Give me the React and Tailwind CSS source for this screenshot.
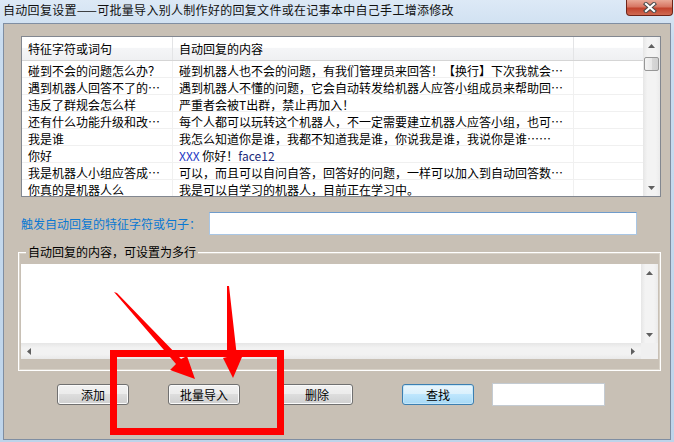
import React from 'react';

const rows = [
  ['碰到不会的问题怎么办？', '碰到机器人也不会的问题，有我们管理员来回答！【换行】下次我就会…'],
  ['遇到机器人回答不了的…', '遇到机器人不懂的问题，它会自动转发给机器人应答小组成员来帮助回…'],
  ['违反了群规会怎么样', '严重者会被T出群，禁止再加入！'],
  ['还有什么功能升级和改…', '每个人都可以玩转这个机器人，不一定需要建立机器人应答小组，也可…'],
  ['我是谁', '我怎么知道你是谁，我都不知道我是谁，你说我是谁，我说你是谁……'],
  ['你好', 'hello'],
  ['我是机器人小组应答成…', '可以，而且可以自问自答，回答好的问题，一样可以加入到自动回答数…'],
  ['你真的是机器人么', '我是可以自学习的机器人，目前正在学习中。'],
];

function Tri({ dir }) {
  const pts = {
    up: '0,4 3.5,0 7,4',
    down: '0,0 7,0 3.5,4',
    left: '4,0 4,7 0,3.5',
    right: '0,0 4,3.5 0,7',
  }[dir];
  const w = dir === 'up' || dir === 'down' ? 7 : 4;
  const h = dir === 'up' || dir === 'down' ? 4 : 7;
  return (
    <svg width={w} height={h} viewBox={`0 0 ${w} ${h}`}>
      <polygon points={pts} fill="#5f5f5f" />
    </svg>
  );
}

function VScroll({ thumb }) {
  return (
    <div className="w-[17px] h-full flex flex-col bg-[linear-gradient(90deg,#e6e6e6,#f3f3f3_25%,#f3f3f3_75%,#ebebeb)]">
      <div className="h-[17px] flex items-center justify-center shrink-0">
        <Tri dir="up" />
      </div>
      {thumb && (
        <div className="mt-[3px] h-[14px] mx-[1px] rounded-[2px] border border-[#979797] bg-[linear-gradient(90deg,#f4f4f4,#e8e8e8_50%,#d8d8d8_51%,#d0d0d0)] shrink-0" />
      )}
      <div className="flex-1" />
      <div className="h-[17px] flex items-center justify-center shrink-0">
        <Tri dir="down" />
      </div>
    </div>
  );
}

function Btn({ children, focused }) {
  return (
    <div
      className={`w-[72px] h-[21px] shrink-0 rounded-[3px] border flex items-center justify-center leading-[16px] text-[12px] text-black ${
        focused
          ? 'border-[#3c7fb1] bg-[linear-gradient(#eaf6fd,#d9f0fc_50%,#bee6fd_50%,#a7d9f5)] shadow-[inset_0_0_0_1px_#c5e6f8]'
          : 'border-[#707070] bg-[linear-gradient(#f2f2f2,#ebebeb_50%,#dddddd_50%,#cfcfcf)] shadow-[inset_0_0_0_1px_#fbfbfb]'
      }`}
    >
      {children}
    </div>
  );
}

export default function App() {
  return (
    <div className="relative w-[674px] h-[442px] overflow-hidden flex flex-col bg-[linear-gradient(#dde9f6,#c9dcef_40px,#bed4ea)] font-['Noto_Sans_CJK_SC','Liberation_Sans',sans-serif] text-[12px] text-black">
      {/* title bar */}
      <div className="h-[23px] flex items-start shrink-0">
        <div className="pl-[3px] pt-[2px] leading-[16px] text-[12px] tracking-[0.3px] text-[#111] whitespace-nowrap">
          自动回复设置——可批量导入别人制作好的回复文件或在记事本中自己手工增添修改
        </div>
        <div className="ml-auto mr-[1px] w-[47px] h-[16px] rounded-b-[4px] border border-t-0 border-[#6e2418] bg-[linear-gradient(#e9a897,#d77663_45%,#c2432d_55%,#cf6a52)] flex items-center justify-center">
          <svg width="14" height="11" viewBox="0 0 14 11">
            <path d="M3 2 L11 9 M11 2 L3 9" stroke="#4a4a4a" strokeWidth="4.2" strokeLinecap="square" />
            <path d="M3 2 L11 9 M11 2 L3 9" stroke="#ffffff" strokeWidth="2.2" strokeLinecap="square" />
          </svg>
        </div>
      </div>

      {/* client area */}
      <div className="flex-1 ml-[3px] mr-[3px] mb-[2px] border border-[#7f8ea2] bg-[#c8c0b5] pl-[14px] pr-[9px] pt-[12px] flex flex-col">
        {/* list view */}
        <div className="ml-[3px] h-[161px] border border-[#828790] bg-white flex shrink-0 overflow-hidden">
          <div className="flex-1 flex flex-col">
            <div className="h-[24px] flex border-b border-[#d5d5d5] bg-[linear-gradient(#ffffff,#ffffff_45%,#f4f5f7_50%,#eff0f2)] shrink-0">
              <div className="w-[151px] shrink-0 border-r border-[#e3e4e6] pl-[6px] pt-[4px] leading-[16px]">特征字符或词句</div>
              <div className="w-[401px] shrink-0 border-r border-[#e3e4e6] pl-[6px] pt-[4px] leading-[16px]">自动回复的内容</div>
              <div className="flex-1" />
            </div>
            {rows.map(([k, v]) => (
              <div key={k} className="h-[17px] shrink-0 flex border-b border-[#f0f0f0]">
                <div className="w-[151px] shrink-0 border-r border-[#f0f0f0] pl-[6px] pt-[2px] leading-[16px] whitespace-nowrap">
                  {k}
                </div>
                <div className="w-[401px] shrink-0 border-r border-[#f0f0f0] pl-[6px] pt-[2px] leading-[16px] whitespace-nowrap">
                  {v === 'hello' ? (
                    <>
                      <span className="text-[#2438c4]">XXX</span> 你好！<span className="text-[#1c2a7a]">face12</span>
                    </>
                  ) : (
                    v
                  )}
                </div>
                <div className="flex-1" />
              </div>
            ))}
          </div>
          <VScroll thumb />
        </div>

        {/* trigger row */}
        <div className="ml-[3px] mt-[15px] h-[23px] flex items-center shrink-0">
          <div className="w-[188px] shrink-0 leading-[16px] text-[#0a78d2]">触发自动回复的特征字符或句子：</div>
          <div className="w-[428px] h-[23px] bg-white border border-[#a9c6e4] border-t-[#6f9ccb]" />
        </div>

        {/* group box */}
        <div className="relative mt-[17px] h-[119px] border border-white shadow-[inset_0_0_0_1px_#d8d2c8] pt-[11px] px-[2px] shrink-0">
          <div className="absolute left-[7px] -top-[9px] px-[2px] bg-[#c8c0b5] leading-[16px]">自动回复的内容，可设置为多行</div>
          <div className="h-[95px] flex flex-col bg-white">
            <div className="flex-1 flex">
              <div className="flex-1 bg-white" />
              <VScroll />
            </div>
            <div className="h-[16px] flex shrink-0">
              <div className="flex-1 flex items-center justify-between px-[6px] bg-[linear-gradient(#e6e6e6,#f2f2f2_30%,#f2f2f2_70%,#e9e9e9)]">
                <Tri dir="left" />
                <Tri dir="right" />
              </div>
              <div className="w-[17px] bg-[#f0f0f0]" />
            </div>
          </div>
        </div>

        {/* buttons */}
        <div className="mt-[13px] flex items-start shrink-0">
          <div className="ml-[39px]">
            <Btn>添加</Btn>
          </div>
          <div className="ml-[39px]">
            <Btn>批量导入</Btn>
          </div>
          <div className="ml-[41px]">
            <Btn>删除</Btn>
          </div>
          <div className="ml-[49px]">
            <Btn focused>查找</Btn>
          </div>
          <div className="ml-[18px] -mt-[1px] w-[113px] h-[23px] bg-white border border-[#c4cbd2]" />
        </div>
      </div>

      {/* red annotation */}
      <div className="absolute left-[110px] top-[350px] w-[174px] h-[85px] border-[7px] border-[#ff0000]" />
      <svg className="absolute left-0 top-0 pointer-events-none" width="674" height="442" viewBox="0 0 674 442">
        <polygon points="114,292 117,293 181,359 187,356 195,379 170,370 176,364" fill="#ff0000" />
        <polygon points="227,286 229,286 237,357 242,357 233,378 223,358 227,357" fill="#ff0000" />
      </svg>
    </div>
  );
}
